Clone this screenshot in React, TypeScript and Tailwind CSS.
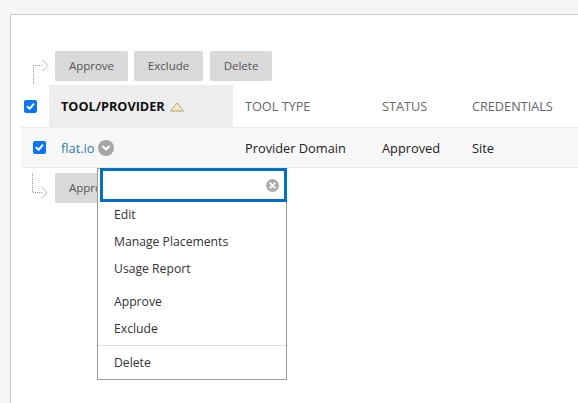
import React from "react";

function ElbowArrow({ up = false }: { up?: boolean }) {
  return (
    <svg width="18" height="26" viewBox="0 0 18 26" fill="none" stroke="#999999" strokeWidth="1">
      {up ? (
        <>
          <path d="M1.5 25V6.5H11" strokeDasharray="1 1" />
          <path d="M10.5 1L16 6.5L10.5 12" stroke="#b5b5b5" />
        </>
      ) : (
        <>
          <path d="M1.5 0V19.5H11" strokeDasharray="1 1" />
          <path d="M10.5 14L16 19.5L10.5 25" stroke="#b5b5b5" />
        </>
      )}
    </svg>
  );
}

function Check() {
  return (
    <span className="flex h-[13px] w-[13px] items-center justify-center rounded-[2px] bg-[#0a76f6]">
      <svg width="11" height="11" viewBox="0 0 11 11" fill="none" stroke="#ffffff" strokeWidth="2" strokeLinecap="round" strokeLinejoin="round">
        <path d="M2.5 5.8L4.6 7.8L8.5 3.2" />
      </svg>
    </span>
  );
}

function ActionButton({ label, width }: { label: string; width: string }) {
  return (
    <button className={`flex h-[30px] items-center justify-center rounded-[2px] bg-[#d9d9d9] text-[11.5px] text-[#555555] ${width}`}>
      {label}
    </button>
  );
}

function Actions() {
  return (
    <div className="flex">
      <ActionButton label="Approve" width="w-[73px]" />
      <div className="w-[6px]" />
      <ActionButton label="Exclude" width="w-[69px]" />
      <div className="w-[7px]" />
      <ActionButton label="Delete" width="w-[62px]" />
    </div>
  );
}

function MenuItem({ label }: { label: string }) {
  return <div className="flex h-[27px] items-center pl-[16px] text-[12.2px] text-[#333333]">{label}</div>;
}

export default function App() {
  return (
    <div className="h-[403px] w-[578px] overflow-hidden bg-[#f6f6f6] pl-[10px] pt-[14px] font-['Open_Sans',sans-serif]">
      <div className="h-[389px] border-l border-t border-[#cccccc] bg-white pl-[10px] pt-[36px]">
        <div className="flex h-[30px] items-start">
          <div className="mt-[8px] w-[34px] pl-[11px]">
            <ElbowArrow up />
          </div>
          <Actions />
        </div>

        <div className="mt-[4px] flex h-[43px] items-stretch border-b border-[#ebebeb] text-[12.7px] text-[#666666]">
          <div className="flex w-[28px] items-center pl-[3px]">
            <Check />
          </div>
          <div className="flex w-[184px] items-center bg-[#eeeeee] pl-[12px] pt-[1px] font-bold text-[#111111]">
            TOOL/PROVIDER
            <svg className="ml-[5px]" width="14" height="10" viewBox="0 0 14 10">
              <path d="M7 1L13.4 9H0.6Z" fill="#f6ebbd" stroke="#a89f80" strokeWidth="1" />
            </svg>
          </div>
          <div className="flex w-[137px] items-center pl-[12px] pt-[1px]">TOOL TYPE</div>
          <div className="flex w-[90px] items-center pl-[12px] pt-[1px]">STATUS</div>
          <div className="flex items-center pl-[12px] pt-[1px]">CREDENTIALS</div>
        </div>

        <div className="flex h-[40px] items-center border-b border-[#ebebeb] bg-[#f7f7f7] text-[12.8px] text-[#222222]">
          <div className="w-[40px] pl-[12px]">
            <Check />
          </div>
          <div className="flex w-[172px] items-center">
            <span className="pt-[2px] text-[#2b7ea8]">flat.io</span>
            <span className="ml-[3px] flex h-[16px] w-[16px] items-center justify-center rounded-full bg-[#a6a6a6]">
              <svg width="10" height="10" viewBox="0 0 10 10" fill="none" stroke="#ffffff" strokeWidth="2" strokeLinecap="round" strokeLinejoin="round">
                <path d="M2 3.5L5 6.5L8 3.5" />
              </svg>
            </span>
          </div>
          <div className="w-[137px] pl-[12px] pt-[2px]">Provider Domain</div>
          <div className="w-[90px] pl-[12px] pt-[2px]">Approved</div>
          <div className="pl-[12px] pt-[2px]">Site</div>
        </div>

        <div className="mt-[5px] flex h-[30px] items-start">
          <div className="w-[34px] pl-[10px]">
            <ElbowArrow />
          </div>
          <Actions />
        </div>
      </div>

      <div className="absolute left-[97px] top-[168px] w-[190px] border border-[#999999] bg-white">
        <div className="-mr-[1px] -mt-[1px] ml-[2px] flex h-[34px] items-center justify-end border-[3px] border-[#0070c9] pr-[5px]">
          <svg width="13" height="13" viewBox="0 0 13 13">
            <circle cx="6.5" cy="6.5" r="6.5" fill="#ababab" />
            <path d="M4.3 4.3L8.7 8.7M8.7 4.3L4.3 8.7" stroke="#ffffff" strokeWidth="1.8" strokeLinecap="round" />
          </svg>
        </div>
        <MenuItem label="Edit" />
        <MenuItem label="Manage Placements" />
        <MenuItem label="Usage Report" />
        <div className="h-[6px]" />
        <MenuItem label="Approve" />
        <MenuItem label="Exclude" />
        <div className="mt-[2px] border-t border-[#dddddd] pb-[2px] pt-[4px]">
          <MenuItem label="Delete" />
        </div>
      </div>
    </div>
  );
}
